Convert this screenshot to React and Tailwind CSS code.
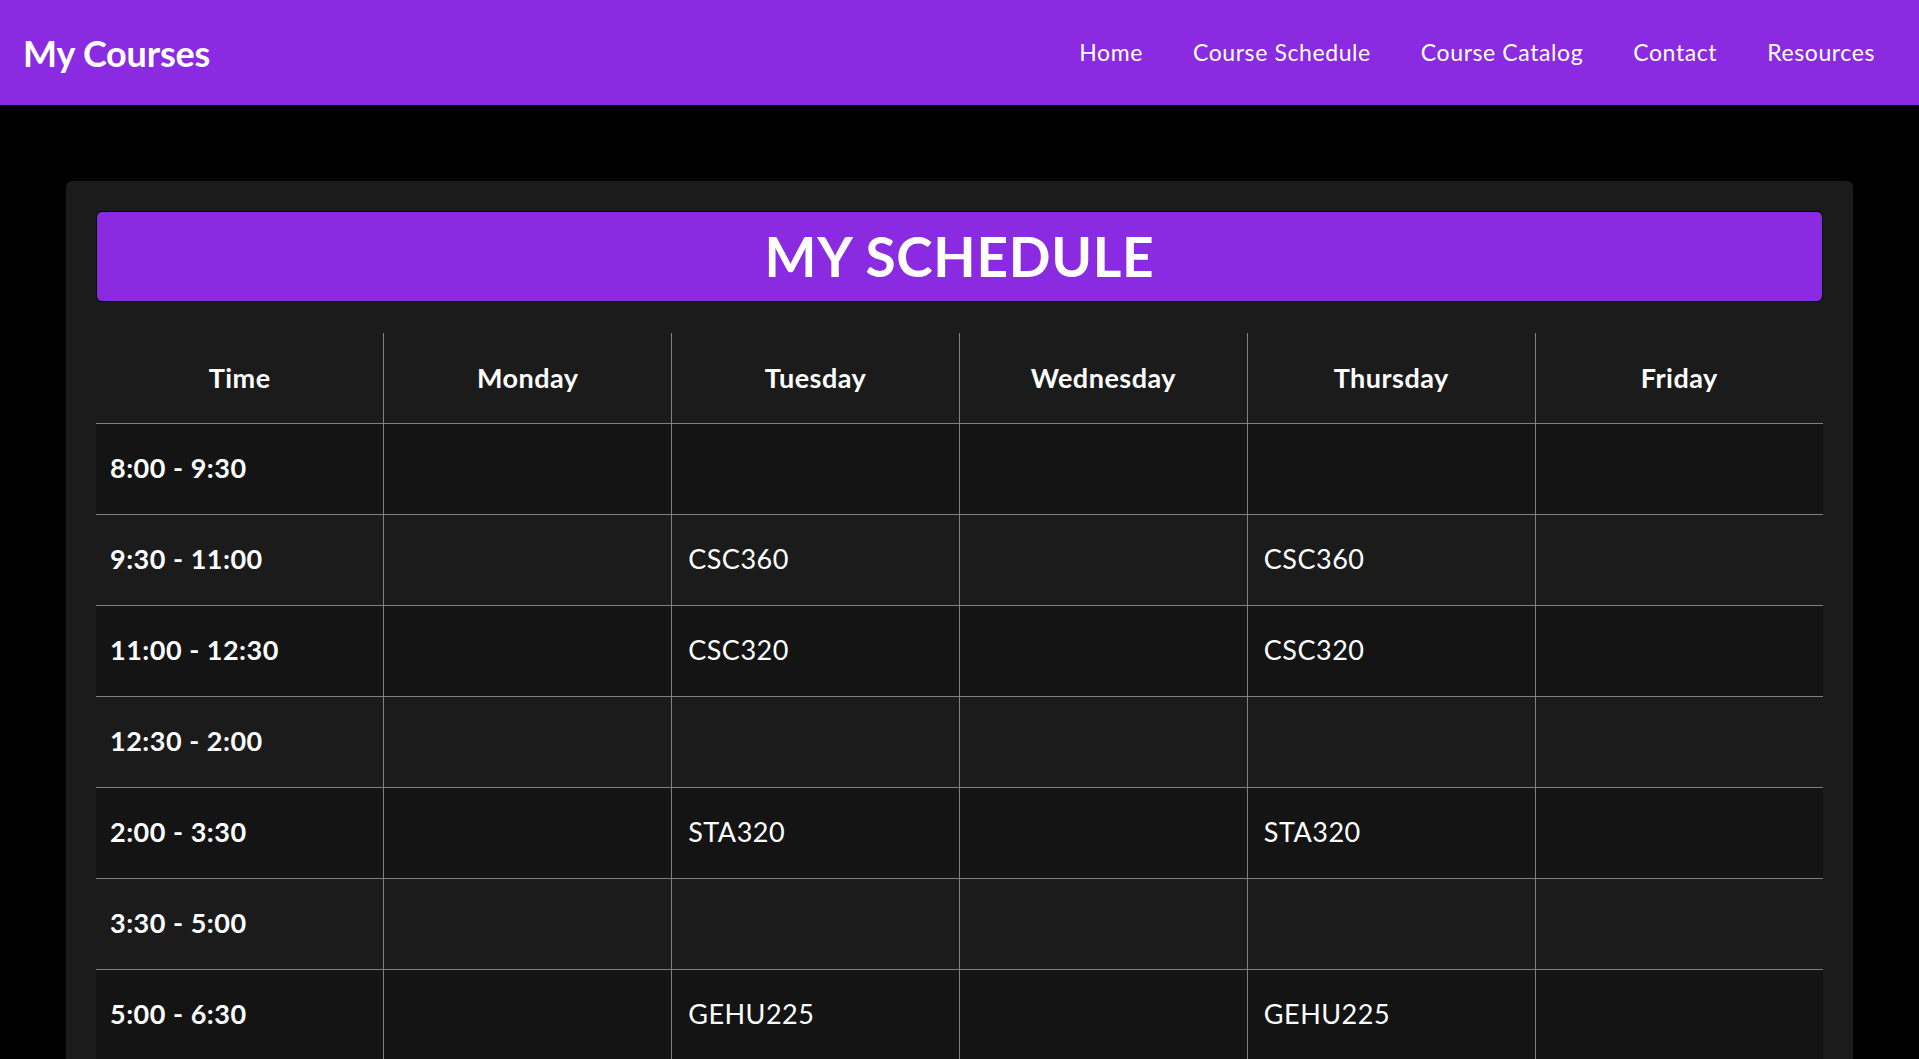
import React from 'react';

const links = ['Home', 'Course Schedule', 'Course Catalog', 'Contact', 'Resources'];
const days = ['Monday', 'Tuesday', 'Wednesday', 'Thursday', 'Friday'];

const rows = [
  { time: '8:00 - 9:30', classes: ['', '', '', '', ''] },
  { time: '9:30 - 11:00', classes: ['', 'CSC360', '', 'CSC360', ''] },
  { time: '11:00 - 12:30', classes: ['', 'CSC320', '', 'CSC320', ''] },
  { time: '12:30 - 2:00', classes: ['', '', '', '', ''] },
  { time: '2:00 - 3:30', classes: ['', 'STA320', '', 'STA320', ''] },
  { time: '3:30 - 5:00', classes: ['', '', '', '', ''] },
  { time: '5:00 - 6:30', classes: ['', 'GEHU225', '', 'GEHU225', ''] },
  { time: '6:30 - 8:00', classes: ['', '', '', '', ''] },
];

export default function App() {
  return (
    <div className="min-h-screen bg-black text-white font-['Lato',sans-serif]">
      {/* Top nav */}
      <nav className="flex h-[105px] items-center justify-between bg-[#8a2be2] pl-[23px] pr-[44px]">
        <a href="#" className="text-[36px] font-bold tracking-[-0.2px]">My Courses</a>
        <ul className="flex gap-[50px] text-[23px] tracking-[0.6px]">
          {links.map((l) => (
            <li key={l}>
              <a href="#">{l}</a>
            </li>
          ))}
        </ul>
      </nav>

      <main className="pt-[76px] pb-10">
        <div className="mx-auto w-[1787px] rounded-md bg-[#1b1b1b] p-[30px]">
          <h1 className="flex h-[91px] items-center justify-center rounded-md border border-black bg-[#8a2be2] text-[55px] font-bold tracking-[0.7px]">
            MY SCHEDULE
          </h1>

          <table className="mt-[31px] w-full table-fixed border-collapse border-hidden text-[27px] tracking-[0.5px]">
            <thead>
              <tr>
                <th className="h-[90px] border border-[#808080] font-bold">Time</th>
                {days.map((d) => (
                  <th key={d} className="h-[90px] border border-[#808080] font-bold">
                    {d}
                  </th>
                ))}
              </tr>
            </thead>
            <tbody>
              {rows.map((r, i) => (
                <tr key={r.time} className={i % 2 === 0 ? 'bg-[#141414]' : 'bg-[#1b1b1b]'}>
                  <td className="h-[91px] border border-[#808080] px-[14px] font-bold">{r.time}</td>
                  {r.classes.map((c, j) => (
                    <td key={j} className="h-[91px] border border-[#808080] px-[16px]">
                      {c}
                    </td>
                  ))}
                </tr>
              ))}
            </tbody>
          </table>
        </div>
      </main>
    </div>
  );
}
